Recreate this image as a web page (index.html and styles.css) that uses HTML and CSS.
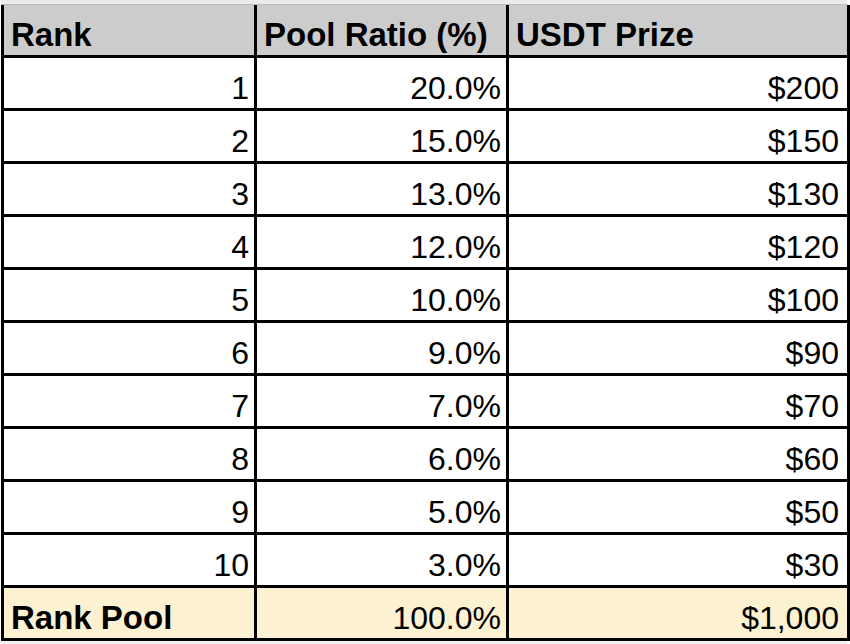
FILE: index.html
```html
<!DOCTYPE html>
<html>
<head>
<meta charset="utf-8">
<link rel="stylesheet" href="styles.css">
</head>
<body>
<div class="sheet">
  <div class="strip strip-top"></div>
  <div class="grid">
    <div class="cell head">Rank</div>
    <div class="cell head">Pool Ratio (%)</div>
    <div class="cell head">USDT Prize</div>

    <div class="cell num c1">1</div><div class="cell num c2">20.0%</div><div class="cell num c3">$200</div>
    <div class="cell num c1">2</div><div class="cell num c2">15.0%</div><div class="cell num c3">$150</div>
    <div class="cell num c1">3</div><div class="cell num c2">13.0%</div><div class="cell num c3">$130</div>
    <div class="cell num c1">4</div><div class="cell num c2">12.0%</div><div class="cell num c3">$120</div>
    <div class="cell num c1">5</div><div class="cell num c2">10.0%</div><div class="cell num c3">$100</div>
    <div class="cell num c1">6</div><div class="cell num c2">9.0%</div><div class="cell num c3">$90</div>
    <div class="cell num c1">7</div><div class="cell num c2">7.0%</div><div class="cell num c3">$70</div>
    <div class="cell num c1">8</div><div class="cell num c2">6.0%</div><div class="cell num c3">$60</div>
    <div class="cell num c1">9</div><div class="cell num c2">5.0%</div><div class="cell num c3">$50</div>
    <div class="cell num c1">10</div><div class="cell num c2">3.0%</div><div class="cell num c3">$30</div>

    <div class="cell total label">Rank Pool</div>
    <div class="cell total num c2">100.0%</div>
    <div class="cell total num c3">$1,000</div>
  </div>
  <div class="strip strip-bottom"></div>
</div>
</body>
</html>
```

FILE: styles.css
```css
html, body {
  margin: 0;
  padding: 0;
  background: #ffffff;
}

.sheet {
  width: 850px;
  font-family: "Liberation Sans", Arial, sans-serif;
  font-size: 32px;
  color: #000;
}

.strip-top {
  height: 4px;
  margin-left: 1px;
  width: 846px;
  background: #ececec;
  border-bottom: 1px solid #bdbdbd;
}

.grid {
  margin-left: 1px;
  display: grid;
  grid-template-columns: 250px 249px 338px;
  grid-auto-rows: 50px;
  gap: 3px;
  padding: 0 3px 3px 3px;
  background: #000;
  width: max-content;
}

.cell {
  display: flex;
  align-items: flex-end;
  line-height: 32px;
  padding: 0 7px 4px 7px;
  background: #fff;
  white-space: nowrap;
}

.head {
  background: #cccccc;
  font-weight: bold;
  font-size: 33px;
  justify-content: flex-start;
}

.num {
  justify-content: flex-end;
}

.c1 {
  padding-right: 5px;
}

.c2 {
  padding-right: 5px;
}

.c3 {
  padding-right: 8px;
}

.total {
  background: #fcf1d0;
}

.label {
  font-weight: bold;
  font-size: 33px;
  justify-content: flex-start;
}

.strip-bottom {
  height: 3px;
  margin-left: 1px;
  width: 846px;
  background: #f1f1f1;
}
```
